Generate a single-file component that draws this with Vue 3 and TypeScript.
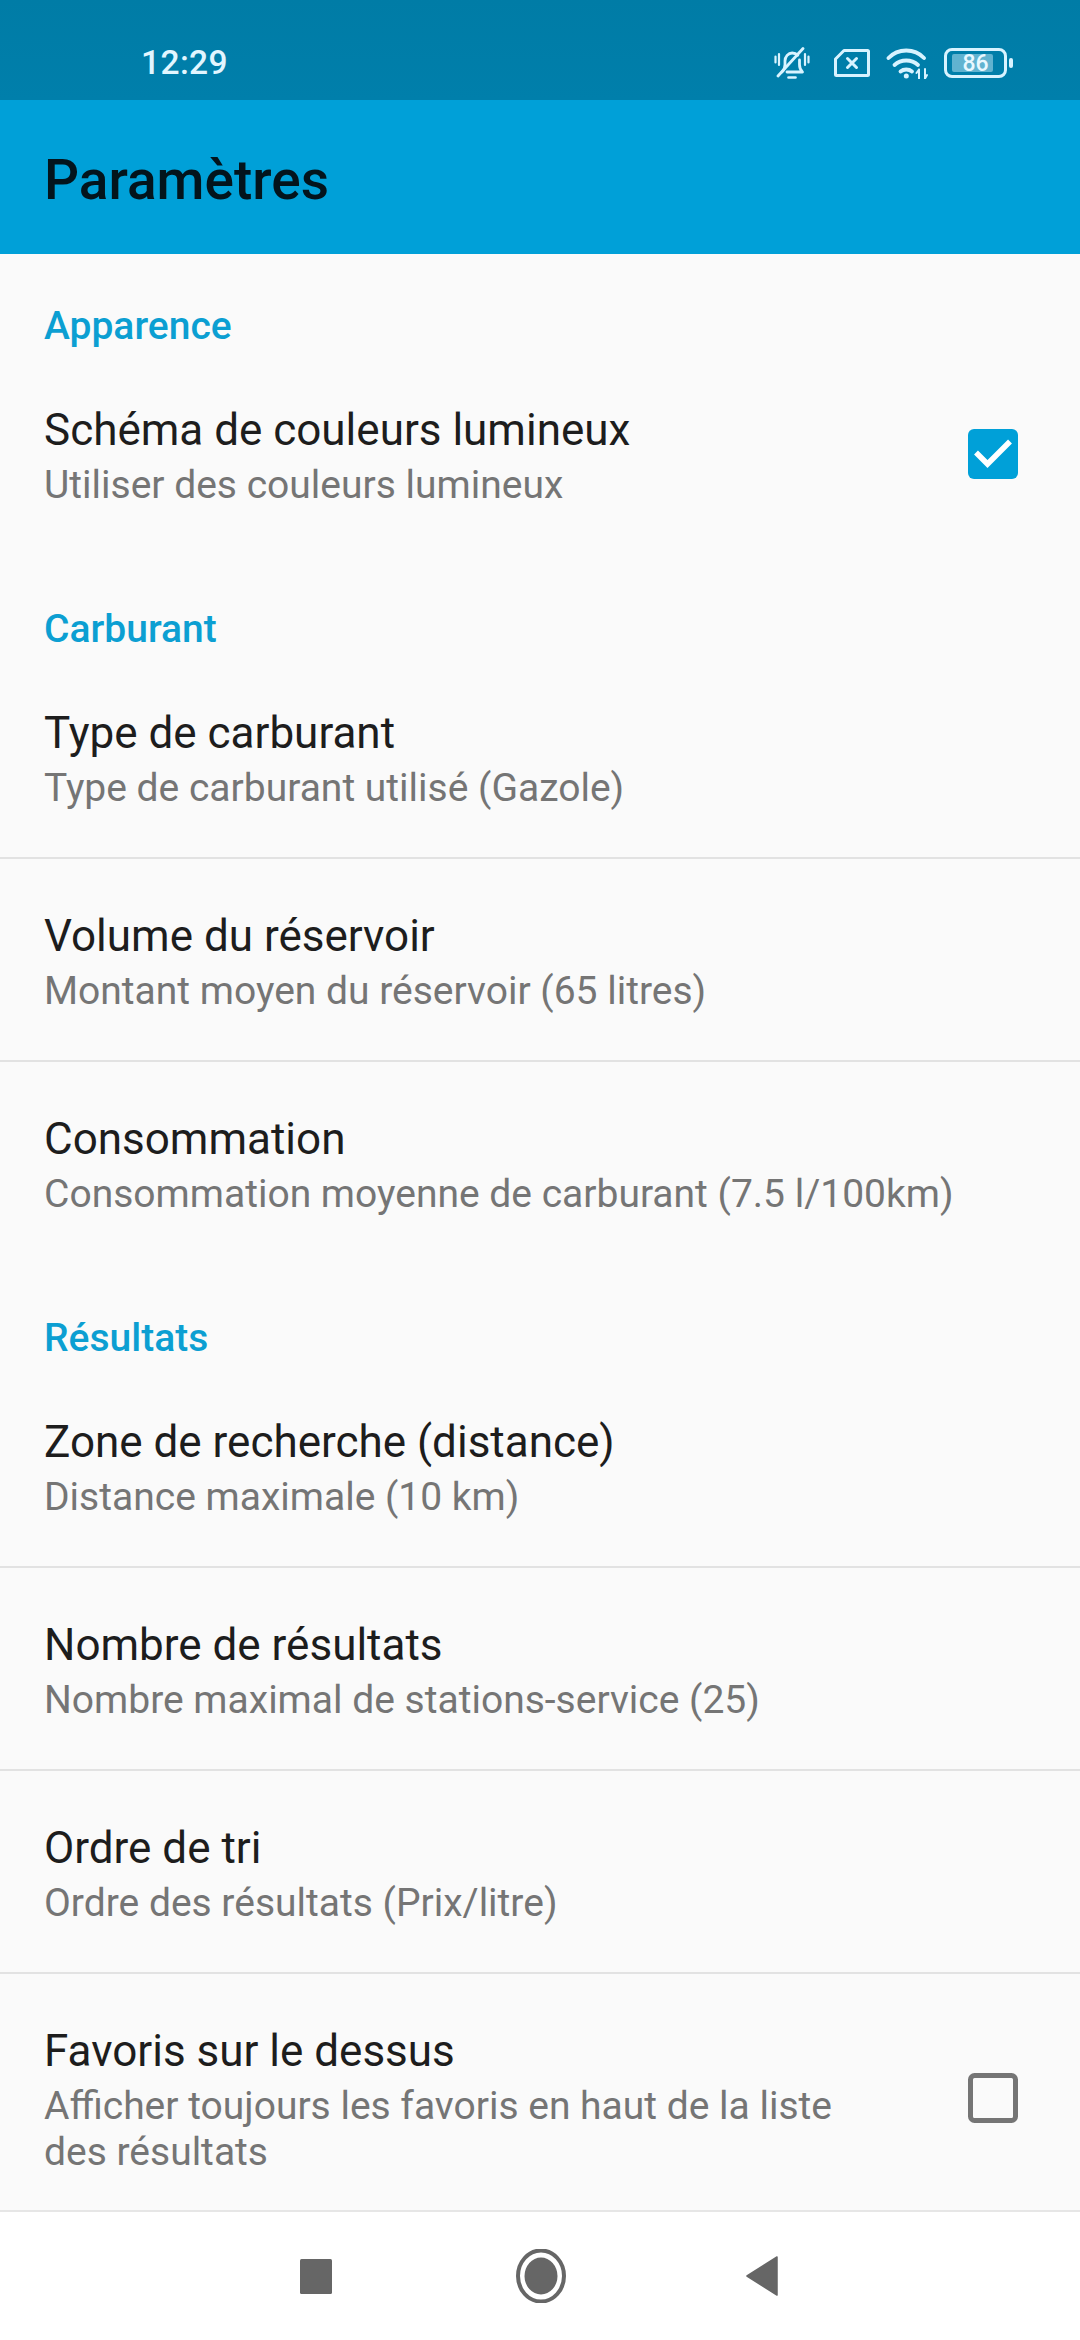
<script setup lang="ts">
interface Row { title: string; sub: string; check?: boolean }
interface Section { label: string; rows: Row[] }
const sections: Section[] = [
  { label: 'Apparence', rows: [
    { title: 'Schéma de couleurs lumineux', sub: 'Utiliser des couleurs lumineux', check: true },
  ] },
  { label: 'Carburant', rows: [
    { title: 'Type de carburant', sub: 'Type de carburant utilisé (Gazole)' },
    { title: 'Volume du réservoir', sub: 'Montant moyen du réservoir (65 litres)' },
    { title: 'Consommation', sub: 'Consommation moyenne de carburant (7.5 l/100km)' },
  ] },
  { label: 'Résultats', rows: [
    { title: 'Zone de recherche (distance)', sub: 'Distance maximale (10 km)' },
    { title: 'Nombre de résultats', sub: 'Nombre maximal de stations-service (25)' },
    { title: 'Ordre de tri', sub: 'Ordre des résultats (Prix/litre)' },
    { title: 'Favoris sur le dessus', sub: 'Afficher toujours les favoris en haut de la liste des résultats', check: false },
  ] },
]
</script>

<template>
  <div class="screen">
    <div class="status">
      <span class="time">12:29</span>
      <div class="icons">
        <svg width="36" height="32" viewBox="0 0 36 32" fill="none" stroke="#d8f3ff" stroke-width="2.800" stroke-linecap="round" stroke-linejoin="round">
          <path d="M8 25c2.200-2 3-3.800 3-7.500V14c0-4.300 3.200-8 7.200-8 2.300 0 4.200.8 5.600 2.300" />
          <path d="M25.500 13v4.500c0 3.700.8 5.500 3 7.500H13" />
          <path d="M4 29 29 1.500" />
          <path d="M1.500 9.500v6M5 7v11M31 7v11M34.500 9.500v6" stroke-width="2.200" />
          <path d="M14.500 30.500h7" stroke-width="2.600" />
        </svg>
        <svg class="sim" width="36" height="28" viewBox="0 0 36 28" fill="none" stroke="#d8f3ff" stroke-width="3" stroke-linejoin="round" stroke-linecap="round">
          <path d="M10 1.500h23.500a1 1 0 0 1 1 1v23a1 1 0 0 1-1 1H2.500a1 1 0 0 1-1-1V10z" />
          <path d="M13.500 9.500l9 9M22.500 9.500l-9 9" />
        </svg>
        <svg width="42" height="32" viewBox="0 0 42 32" fill="none" stroke="#d8f3ff" stroke-width="3.800" stroke-linecap="round">
          <path d="M2.500 11c9.500-10 26-10 35.500 0" />
          <path d="M8.500 18c6.500-6 17-6 23.500 0" />
          <path d="M14.500 24.500c3.200-2.700 8.300-2.700 11.500 0" />
          <circle cx="20.300" cy="29" r="2.500" fill="#d8f3ff" stroke="none" />
          <path d="M33 31.500v-9M33 22.500l-2.500 3.500M39 22v9.500M39 31.500l2-3.500" stroke-width="2" />
        </svg>
        <div class="battery">
          <div class="cell">
            <span class="fill"></span>
            <span class="level">86</span>
          </div>
          <span class="nub"></span>
        </div>
      </div>
    </div>

    <header class="appbar">Paramètres</header>

    <main class="list">
      <section v-for="s in sections" :key="s.label" class="section">
        <h2 class="label">{{ s.label }}</h2>
        <div v-for="r in s.rows" :key="r.title" class="row">
          <div class="text">
            <div class="title">{{ r.title }}</div>
            <div class="sub">{{ r.sub }}</div>
          </div>
          <svg v-if="r.check === true" class="box" width="50" height="50" viewBox="0 0 50 50">
            <rect width="50" height="50" rx="6" fill="#00a0d8" />
            <path d="M8 23.500 19.500 35 42 12.500" fill="none" stroke="#fff" stroke-width="5.500" />
          </svg>
          <svg v-else-if="r.check === false" class="box" width="50" height="50" viewBox="0 0 50 50">
            <rect x="2.500" y="2.500" width="45" height="45" rx="4" fill="none" stroke="#757575" stroke-width="5" />
          </svg>
        </div>
      </section>
    </main>

    <nav class="nav">
      <svg width="32" height="35" viewBox="0 0 32 35"><rect width="32" height="35" rx="1.500" fill="#666" /></svg>
      <svg width="50" height="54" viewBox="0 0 50 54">
        <ellipse cx="25" cy="27" rx="23" ry="25.500" fill="none" stroke="#666" stroke-width="4" />
        <ellipse cx="25" cy="27" rx="16.500" ry="18.500" fill="#666" />
      </svg>
      <svg class="back" width="32" height="40" viewBox="0 0 32 40"><path d="M31 1 1 20l30 19z" fill="#666" stroke="#666" stroke-width="1.500" stroke-linejoin="round" /></svg>
    </nav>
  </div>
</template>

<style>
html, body { margin: 0; padding: 0; }
</style>

<style scoped>
.screen {
  width: 1080px;
  height: 2340px;
  display: flex;
  flex-direction: column;
  overflow: hidden;
  background: #fafafa;
  font-family: Roboto, "Noto Sans", sans-serif;
}
.status {
  height: 100px;
  flex: none;
  box-sizing: border-box;
  display: flex;
  align-items: center;
  justify-content: space-between;
  padding: 26px 67px 0 141px;
  background: linear-gradient(#007ca6, #007fab);
}
.time {
  font-size: 33.500px;
  font-weight: 500;
  line-height: 40px;
  color: #e2f6ff;
  letter-spacing: 0.400px;
}
.icons {
  display: flex;
  align-items: center;
  gap: 16px;
}
.sim {
  margin-left: 8px;
}
.battery {
  display: flex;
  align-items: center;
  gap: 2px;
}
.cell {
  position: relative;
  width: 63px;
  height: 30px;
  box-sizing: border-box;
  border: 3px solid #d8f3ff;
  border-radius: 8px;
  display: flex;
  align-items: center;
  justify-content: center;
}
.fill {
  position: absolute;
  left: 5px;
  top: 3px;
  bottom: 3px;
  width: 41px;
  background: rgba(216, 243, 255, 0.45);
  border-radius: 2px;
}
.level {
  position: relative;
  font-size: 23px;
  font-weight: 500;
  line-height: 1;
  color: #e8f8ff;
}
.nub {
  width: 4px;
  height: 10px;
  background: #d8f3ff;
  border-radius: 2px;
}
.appbar {
  height: 154px;
  flex: none;
  box-sizing: border-box;
  padding: 5px 0 0 44px;
  display: flex;
  align-items: center;
  background: #00a0d8;
  color: #03141c;
  font-size: 55px;
  font-weight: 500;
}
.list {
  flex: 1;
  min-height: 0;
  overflow: hidden;
}
.label {
  margin: 0;
  height: 99px;
  box-sizing: border-box;
  padding: 48px 44px 0;
  font-size: 39px;
  line-height: 48px;
  font-weight: 500;
  color: #0c9fd2;
}
.section + .section .label {
  padding-top: 49px;
  height: 100px;
}
.row {
  display: flex;
  align-items: center;
  box-sizing: border-box;
  padding: 47px 40px 46px 44px;
  border-bottom: 2px solid #e2e2e2;
}
.row:last-child {
  border-bottom: 0;
  padding-bottom: 48px;
}
.text {
  flex: 1;
  min-width: 0;
}
.title {
  font-size: 44px;
  line-height: 60px;
  color: #1d1d1d;
}
.sub {
  font-size: 39px;
  line-height: 46px;
  margin-top: 2px;
  color: #757575;
}
.box {
  flex: none;
  margin: 0 22px 0 84px;
}
.nav {
  height: 130px;
  flex: none;
  box-sizing: border-box;
  border-top: 2px solid #e6e6e6;
  background: #fff;
  display: flex;
  align-items: center;
  gap: 184px;
  padding-left: 300px;
}
.back {
  margin-left: -4px;
}
</style>
